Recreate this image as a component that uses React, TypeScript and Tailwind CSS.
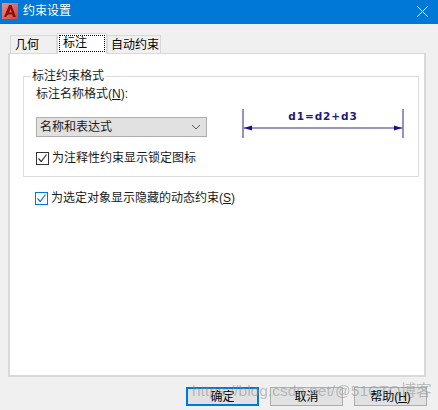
const FONT = "font-['Liberation_Sans','Noto_Sans_CJK_SC',sans-serif]";

const CheckRow = ({ label, focused }: { label: React.ReactNode; focused?: boolean }) => (
  <div className="flex items-center h-[14px]">
    <div
      className={
        "w-[13px] h-[13px] bg-white border flex items-center justify-center " +
        (focused ? "border-[#0078d7]" : "border-[#333333]")
      }
    >
      <svg width="11" height="11" viewBox="0 0 11 11" fill="none">
        <path d="M1.5 5.5 L4.2 8.5 L9.5 1.5" stroke={focused ? "#0078d7" : "#333333"} strokeWidth="1.2" />
      </svg>
    </div>
    <span className="ml-[3px] text-[12px] leading-[14px] text-[#1a1a1a]">{label}</span>
  </div>
);

const Button = ({ label, primary }: { label: React.ReactNode; primary?: boolean }) => (
  <button
    className={
      "w-[73px] h-[19px] flex items-center justify-center bg-[#e1e1e1] text-[12px] leading-none text-black " +
      (primary ? "border-2 border-[#0078d7]" : "border border-[#adadad]")
    }
  >
    {label}
  </button>
);

export default function App() {
  return (
    <div className={"relative w-[438px] h-[410px] overflow-hidden bg-[#f0f0f0] flex flex-col " + FONT}>
      {/* title bar */}
      <div className="h-[24px] pb-[2px] bg-[#0078d7] flex items-center shrink-0">
        <svg className="ml-[2px]" width="16" height="16" viewBox="0 0 16 16">
          <defs>
            <linearGradient id="acad" x1="0" y1="0" x2="1" y2="1">
              <stop offset="0" stopColor="#e9928c" />
              <stop offset="1" stopColor="#d0423c" />
            </linearGradient>
          </defs>
          <rect width="16" height="16" fill="url(#acad)" />
          <path d="M2 14 L7 2 L9.5 2 L14 14 L11 14 L10.2 11.5 L6 11.5 L4 14 Z" fill="#8f0f0f" />
          <path d="M7.2 9.5 L9.5 9.5 L8.8 6 Z" fill="#e8706b" />
        </svg>
        <span className="ml-[5px] text-[12px] text-white">约束设置</span>
        <svg className="ml-auto mr-[10px]" width="11" height="11" viewBox="0 0 11 11" fill="none">
          <path d="M0.5 0.5 L10.5 10.5 M10.5 0.5 L0.5 10.5" stroke="#ffffff" strokeWidth="1" />
        </svg>
      </div>

      {/* tabs */}
      <div className="h-[29px] flex items-end pl-[10px] shrink-0">
        <div className="w-[47px] h-[18px] bg-[#f0f0f0] border border-b-0 border-[#d9d9d9] text-[12px] leading-[18px] text-black pl-[4px]">
          几何
        </div>
        <div className="relative z-10 w-[50px] h-[21px] -mb-px bg-white border border-b-0 border-[#d9d9d9] text-[12px] text-black pt-[1px] pl-[1px]">
          <div className="w-[46px] h-[17px] border border-dotted border-black leading-[14px] pl-[3px]">标注</div>
        </div>
        <div className="w-[54px] h-[18px] bg-[#f0f0f0] border border-b-0 border-[#d9d9d9] text-[12px] leading-[18px] text-black pl-[3px]">
          自动约束
        </div>
      </div>

      {/* tab panel */}
      <div className="ml-[8px] w-[418px] h-[324px] bg-white border-2 border-t border-[#d9d9d9] pl-[13px] pt-[22px] shrink-0">
        <div className="relative w-[396px] h-[101px] border border-[#dcdcdc] pl-[12px] pt-[10px]">
          <span className="absolute left-[7px] -top-[8px] bg-white px-[1px] text-[12px] leading-[14px] text-[#1a1a1a]">
            标注约束格式
          </span>
          <div className="text-[12px] leading-[14px] text-[#1a1a1a]">
            标注名称格式(<span className="underline">N</span>):
          </div>
          <div className="mt-[16px] w-[171px] h-[20px] bg-[#e1e1e1] border border-[#adadad] flex items-center pl-[3px] pr-[5px] text-[12px] text-[#1a1a1a]">
            名称和表达式
            <svg className="ml-auto" width="10" height="6" viewBox="0 0 10 6" fill="none">
              <path d="M1 1 L5 5 L9 1" stroke="#555555" strokeWidth="1" />
            </svg>
          </div>
          <div className="mt-[14px]">
            <CheckRow label="为注释性约束显示锁定图标" />
          </div>
          {/* dimension preview */}
          <svg className="absolute left-[218px] top-[31px]" width="162" height="31" viewBox="0 0 162 31">
            <path d="M1 1 V30 M161 1 V30" stroke="#6f62a8" strokeWidth="1.4" />
            <path d="M1 20 H161" stroke="#7a72ad" strokeWidth="1.6" />
            <path d="M2 20 L10 17.5 V22.5 Z M160 20 L152 17.5 V22.5 Z" fill="#14108c" />
            <text
              x="81"
              y="12"
              textAnchor="middle"
              fontSize="10.5"
              fontWeight="700"
              letterSpacing="0.9"
              fill="#1d1a7c"
              fontFamily="'DejaVu Sans', sans-serif"
            >
              d1=d2+d3
            </text>
          </svg>
        </div>
        <div className="mt-[14px] ml-[12px]">
          <CheckRow focused label={<>为选定对象显示隐藏的动态约束(<span className="underline">S</span>)</>} />
        </div>
      </div>

      {/* buttons */}
      <div className="mt-[10px] flex justify-end gap-[11px] pr-[11px] shrink-0">
        <Button primary label="确定" />
        <Button label="取消" />
        <Button label={<>帮助(<span className="underline">H</span>)</>} />
      </div>

      {/* watermark */}
      <span className="absolute left-[192px] top-[382px] text-[15.5px] leading-[18px] whitespace-nowrap text-[#8a8a8a]/50 pointer-events-none">
        https://blog.csdn.net/@51CTO博客
      </span>
    </div>
  );
}
